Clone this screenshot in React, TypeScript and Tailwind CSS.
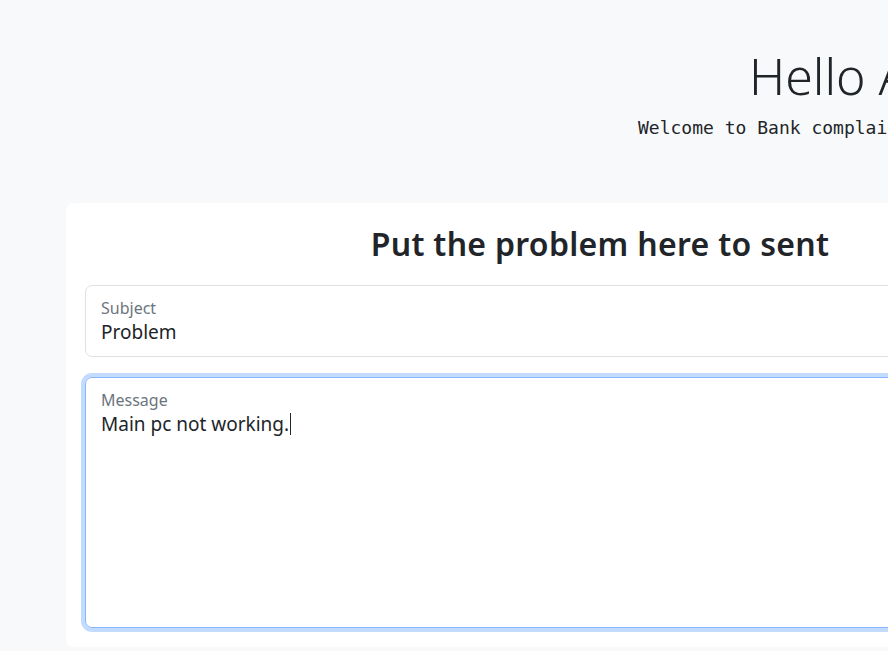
import React from "react";

export default function App() {
  return (
    <div className="min-h-screen w-full overflow-hidden bg-[#f8f9fa] text-[#212529]" style={{ fontFamily: '"Noto Sans", "Open Sans", sans-serif' }}>
      <div className="w-[1200px]">
        <header className="pt-[46px] pl-[749px]">
          <h1 className="text-[50px] font-light leading-[60px] whitespace-nowrap">Hello Admin</h1>
          <p className="mt-[10px] -ml-[111px] text-[18px] leading-[24px] whitespace-nowrap" style={{ fontFamily: '"DejaVu Sans Mono", monospace' }}>
            Welcome to Bank complaint system
          </p>
        </header>
        <section className="ml-[66px] mt-[63px] w-[1068px] rounded-[8px] bg-white px-[19px] pt-[20px] pb-[19px]">
          <h3 className="text-center text-[32px] font-semibold leading-[42px] tracking-[0.3px]">Put the problem here to sent</h3>
          <div className="mt-[20px] h-[72px] rounded-[7px] border border-[#dee2e6] px-[15px] pt-[12px]">
            <div className="text-[16px] leading-[20px] text-[#6c757d]">Subject</div>
            <div className="mt-[1px] text-[19px] leading-[26px]">Problem</div>
          </div>
          <div className="mt-[20px] h-[251px] rounded-[7px] border border-[#86b7fe] px-[15px] pt-[12px] shadow-[0_0_0_4px_rgba(13,110,253,0.25)]">
            <div className="text-[16px] leading-[20px] text-[#6c757d]">Message</div>
            <div className="mt-[1px] flex items-center text-[19px] leading-[26px]">
              <span>Main pc not working.</span>
              <span className="ml-[1px] inline-block h-[22px] w-px bg-[#212529]" />
            </div>
          </div>
        </section>
      </div>
    </div>
  );
}
